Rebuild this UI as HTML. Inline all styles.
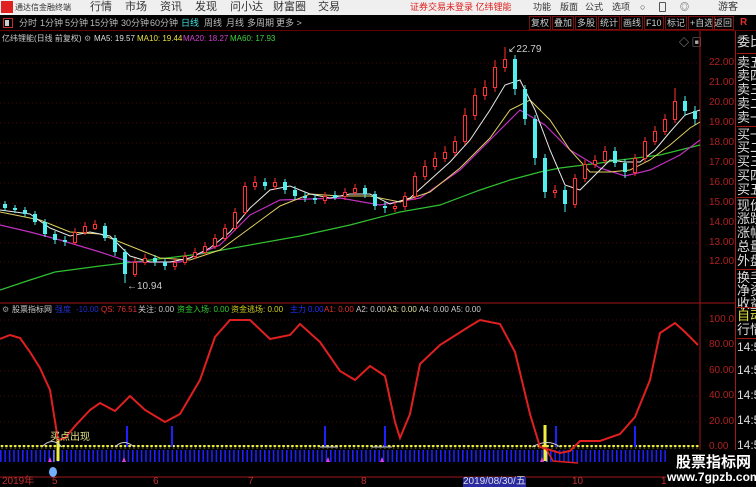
<!DOCTYPE html>
<html><head><meta charset="utf-8"><style>
*{margin:0;padding:0;box-sizing:border-box}
body{width:756px;height:487px;background:#000;overflow:hidden;position:relative;font-family:"Liberation Sans","Noto Sans CJK SC",sans-serif}
.a{position:absolute;white-space:nowrap}
#top{position:absolute;left:0;top:0;width:756px;height:15px;background:#efefef;font-size:11px;color:#333}
#top .a{line-height:15px}
#r2{position:absolute;left:0;top:15px;width:756px;height:16px;background:#000;border-bottom:1px solid #600;font-size:9px;color:#bbb}
#r2 .a{line-height:16px}
.b{position:absolute;top:1px;height:14px;border:1px solid #7a1010;font-size:9px;color:#ccc;line-height:12px;padding:0 1px}
#rc{position:absolute;left:735px;top:31px;width:21px;height:456px;border-left:1px solid #a01818;overflow:hidden;font-size:13px;color:#ddd}
#rc div{position:absolute;left:1px;white-space:nowrap;line-height:14px}
.ax{position:absolute;left:709px;font-size:10px;color:#b02020}
.h{position:absolute;top:304px;font-size:8px;line-height:12px;white-space:nowrap;color:#ccc}
.m{position:absolute;top:33px;font-size:8px;line-height:11px;white-space:nowrap}
.t{position:absolute;top:477px;font-size:10px;color:#c03030;line-height:10px}
</style></head><body>
<div id="top">
<div class="a" style="left:1px;top:1px;width:12px;height:12px;background:#e02020;line-height:12px"></div>
<div class="a" style="left:15px;font-size:8px">通达信金融终端</div>
<div class="a" style="left:90px">行情</div>
<div class="a" style="left:125px">市场</div>
<div class="a" style="left:160px">资讯</div>
<div class="a" style="left:195px">发现</div>
<div class="a" style="left:230px">问小达</div>
<div class="a" style="left:273px">财富圈</div>
<div class="a" style="left:318px">交易</div>
<div class="a" style="left:410px;color:#e02020;font-size:9px">证券交易未登录 亿纬锂能</div>
<div class="a" style="left:533px;font-size:9px">功能</div>
<div class="a" style="left:560px;font-size:9px">版面</div>
<div class="a" style="left:585px;font-size:9px">公式</div>
<div class="a" style="left:612px;font-size:9px">选项</div>
<div class="a" style="left:640px;font-size:9px">○</div>
<div class="a" style="left:659px;top:2px;width:7px;height:10px;border:1px solid #555;border-radius:1px"></div>
<div class="a" style="left:680px;font-size:9px">◎</div>
<div class="a" style="left:718px;font-size:10px">游客</div>
</div>
<div id="r2">
<div class="a" style="left:3px;top:3px;width:10px;height:10px;border:1px solid #c03030;line-height:8px"></div>
<div class="a" style="left:5px;top:5px;width:4px;height:6px;background:#ccc;line-height:6px"></div>
<div class="a" style="left:19px">分时</div>
<div class="a" style="left:40px">1分钟</div>
<div class="a" style="left:65px">5分钟</div>
<div class="a" style="left:90px">15分钟</div>
<div class="a" style="left:121px">30分钟</div>
<div class="a" style="left:150px">60分钟</div>
<div class="a" style="left:181px;color:#40e0e0">日线</div>
<div class="a" style="left:204px">周线</div>
<div class="a" style="left:226px">月线</div>
<div class="a" style="left:247px">多周期</div>
<div class="a" style="left:276px">更多 &gt;</div>
<div class="b" style="left:529px">复权</div><div class="b" style="left:552px">叠加</div><div class="b" style="left:575px">多股</div><div class="b" style="left:598px">统计</div><div class="b" style="left:621px">画线</div><div class="b" style="left:644px">F10</div><div class="b" style="left:665px">标记</div><div class="b" style="left:688px">+自选</div><div class="b" style="left:712px">返回</div>
<div class="a" style="left:740px;top:0;color:#e03030;font-size:10px;font-weight:bold">R</div>
</div>
<div class="m" style="left:2px;color:#ccc">亿纬锂能(日线 前复权)</div>
<div class="m" style="left:84px;color:#999">⚙</div>
<div class="m" style="left:94px;color:#ddd">MA5: 19.57</div>
<div class="m" style="left:137px;color:#e8e040">MA10: 19.44</div>
<div class="m" style="left:183px;color:#d040d0">MA20: 18.27</div>
<div class="m" style="left:230px;color:#40d040">MA60: 17.93</div>
<div class="a" style="left:679px;top:34px;font-size:10px;color:#aaa">◇ ▣</div>

<svg class="a" style="left:0;top:0" width="735" height="487">
<defs>
<pattern id="bl" width="4.4" height="12" patternUnits="userSpaceOnUse"><rect x="0" y="0" width="1.6" height="12" fill="#1d20ff"/></pattern>
<pattern id="yd" width="4.4" height="4" patternUnits="userSpaceOnUse"><circle cx="2" cy="2" r="1.4" fill="#f0f040"/></pattern>
</defs>
<g stroke="#4a0808" stroke-dasharray="1 3" stroke-width="1">
<path d="M0 63H700M0 83H700M0 103H700M0 123H700M0 143H700M0 163H700M0 183H700M0 203H700M0 223H700M0 243H700M0 262H700"/>
<path d="M0 320H700M0 345H700M0 371H700M0 396H700M0 422H700"/>
</g>
<path d="M700 31V477M0 303H735M0 477H735" stroke="#a01818" fill="none"/>
<polyline fill="none" stroke="#30c030" stroke-width="1.2" points="0,290 30,280 55,272 100,266 150,260 200,254 250,245 300,236 350,225 400,212 440,205 480,190 510,180 540,172 560,168 600,163 620,160 660,155 700,145"/>
<polyline fill="none" stroke="#c030c0" stroke-width="1.2" points="0,225 30,232 60,240 100,252 130,262 180,262 220,245 250,215 280,200 340,198 380,205 420,198 460,170 500,130 520,110 545,125 570,150 600,168 625,176 650,170 680,155 700,140"/>
<polyline fill="none" stroke="#e0d060" stroke-width="1" points="0,212 40,220 70,232 100,234 130,246 160,258 190,260 220,250 250,228 280,206 310,194 340,196 370,196 400,202 430,192 460,168 490,138 510,110 530,100 550,120 570,150 590,172 610,172 630,170 650,160 670,145 690,128 700,122"/>
<polyline fill="none" stroke="#e8e8e8" stroke-width="1" points="0,210 30,214 50,228 70,236 90,232 110,236 130,256 150,262 170,262 190,258 210,248 230,232 250,208 270,190 290,186 310,194 330,198 350,194 370,194 390,204 410,198 430,180 450,162 470,140 490,110 505,85 520,80 535,110 550,150 565,185 580,190 595,175 610,160 625,162 640,162 655,150 670,132 685,115 700,110"/>
<path stroke="#50f0f0" stroke-width="1" d="M5 201V211M15 205V213M25 207V217M35 211V225M45 219V237M55 231V244M65 236V246M105 223V241M115 235V256M125 249V283M155 255V266M165 259V270M265 178V190M285 179V194M295 186V200M305 192V202M315 194V204M335 191V200M365 185V198M375 191V210M385 202V213M515 55V95M525 85V125M535 115V165M545 154V198M565 186V212M615 147V167M625 159V178M685 96V116M695 106V125"/>
<path stroke="#ff3030" stroke-width="1" d="M75 228V245M85 222V235M95 220V230M135 258V277M145 254V265M175 258V270M185 252V265M195 248V259M205 242V255M215 234V249M225 224V241M235 208V231M245 182V215M255 176V190M275 178V190M325 192V204M345 188V200M355 184V196M395 202V212M405 192V210M415 172V200M425 160V180M435 152V170M445 146V162M455 136V156M465 108V145M475 88V120M485 80V100M495 60V92M505 47V72M555 185V198M575 174V208M585 160V182M595 155V168M605 146V164M635 154V176M645 137V162M655 126V145M665 114V135M675 88V123"/>
<g fill="#50f0f0">
<rect x="3" y="204" width="4" height="4"/><rect x="13" y="208" width="4" height="2"/><rect x="23" y="210" width="4" height="4"/><rect x="33" y="214" width="4" height="8"/><rect x="43" y="222" width="4" height="12"/><rect x="53" y="234" width="4" height="6"/><rect x="63" y="240" width="4" height="2"/><rect x="103" y="226" width="4" height="12"/><rect x="113" y="238" width="4" height="14"/><rect x="123" y="252" width="4" height="22"/><rect x="153" y="258" width="4" height="4"/><rect x="163" y="262" width="4" height="4"/><rect x="263" y="182" width="4" height="4"/><rect x="283" y="182" width="4" height="8"/><rect x="293" y="190" width="4" height="6"/><rect x="303" y="196" width="4" height="2"/><rect x="313" y="198" width="4" height="2"/><rect x="333" y="195" width="4" height="3"/><rect x="363" y="188" width="4" height="6"/><rect x="373" y="194" width="4" height="12"/><rect x="383" y="206" width="4" height="2"/><rect x="513" y="59" width="4" height="30"/><rect x="523" y="89" width="4" height="30"/><rect x="533" y="119" width="4" height="39"/><rect x="543" y="158" width="4" height="34"/><rect x="563" y="190" width="4" height="14"/><rect x="613" y="151" width="4" height="12"/><rect x="623" y="163" width="4" height="9"/><rect x="683" y="101" width="4" height="10"/><rect x="693" y="111" width="4" height="8"/>
</g>
<g fill="#000" stroke="#ff3030" stroke-width="1">
<rect x="73.5" y="232.5" width="3" height="10"/><rect x="83.5" y="226.5" width="3" height="6"/><rect x="93.5" y="224.5" width="3" height="4"/><rect x="133.5" y="262.5" width="3" height="12"/><rect x="143.5" y="258.5" width="3" height="4"/><rect x="173.5" y="262.5" width="3" height="4"/><rect x="183.5" y="256.5" width="3" height="6"/><rect x="193.5" y="252.5" width="3" height="4"/><rect x="203.5" y="246.5" width="3" height="6"/><rect x="213.5" y="238.5" width="3" height="8"/><rect x="223.5" y="228.5" width="3" height="10"/><rect x="233.5" y="212.5" width="3" height="16"/><rect x="243.5" y="186.5" width="3" height="26"/><rect x="253.5" y="182.5" width="3" height="4"/><rect x="273.5" y="182.5" width="3" height="4"/><rect x="323.5" y="196.5" width="3" height="4"/><rect x="343.5" y="192.5" width="3" height="4"/><rect x="353.5" y="188.5" width="3" height="4"/><rect x="393.5" y="206.5" width="3" height="2"/><rect x="403.5" y="196.5" width="3" height="10"/><rect x="413.5" y="176.5" width="3" height="20"/><rect x="423.5" y="166.5" width="3" height="10"/><rect x="433.5" y="158.5" width="3" height="8"/><rect x="443.5" y="152.5" width="3" height="6"/><rect x="453.5" y="141.5" width="3" height="11"/><rect x="463.5" y="115.5" width="3" height="26"/><rect x="473.5" y="95.5" width="3" height="20"/><rect x="483.5" y="87.5" width="3" height="8"/><rect x="493.5" y="67.5" width="3" height="20"/><rect x="503.5" y="59.5" width="3" height="8"/><rect x="553.5" y="190.5" width="3" height="2"/><rect x="573.5" y="178.5" width="3" height="26"/><rect x="583.5" y="164.5" width="3" height="14"/><rect x="593.5" y="160.5" width="3" height="4"/><rect x="603.5" y="151.5" width="3" height="9"/><rect x="633.5" y="158.5" width="3" height="14"/><rect x="643.5" y="141.5" width="3" height="17"/><rect x="653.5" y="131.5" width="3" height="10"/><rect x="663.5" y="119.5" width="3" height="12"/><rect x="673.5" y="101.5" width="3" height="18"/>
</g>
<text x="127" y="289" font-size="10" fill="#ccc" font-family="Liberation Sans">←10.94</text>
<text x="508" y="52" font-size="10" fill="#ccc" font-family="Liberation Sans">↙22.79</text>
<rect x="0" y="450" width="700" height="12" fill="url(#bl)"/>
<rect x="0" y="445" width="700" height="4" fill="url(#yd)"/>
<path stroke="#2020ff" stroke-width="2" d="M127 426V447M172 426V447M325 426V447M385 426V447M556 426V447M635 426V447"/>
<path stroke="#f0f040" stroke-width="3" d="M58 440V461M545 425V461"/>
<path stroke="#fff" stroke-width="1" d="M54 450V462M547 450V462" opacity=".7"/>
<path fill="none" stroke="#ccc" stroke-width="1" d="M42 447Q52 436 62 447M115 447Q124 438 134 447M320 447H338M372 447H392M532 447Q548 438 560 447"/>
<g fill="#e040e0"><path d="M48 462l2-5 2 5z"/><path d="M122 462l2-5 2 5z"/><path d="M326 462l2-5 2 5z"/><path d="M380 462l2-5 2 5z"/><path d="M540 462l2-5 2 5z"/></g>
<polyline fill="none" stroke="#e02020" stroke-width="2" points="0,339 10,335 20,338 30,352 40,368 50,390 58,440 65,438 75,426 90,410 100,403 115,411 130,396 145,410 165,422 180,414 200,380 215,337 230,320 250,320 270,339 290,335 300,324 320,342 340,371 355,380 370,366 385,376 395,422 400,438 410,414 420,364 440,345 470,326 480,320 500,324 515,352 530,414 540,447 560,453 570,451 580,441 600,441 620,434 635,417 650,380 660,333 675,323 685,332 698,345"/>
<path d="M545 447l8 14 25 2" stroke="#e02020" stroke-width="1.5" fill="none"/>
<text x="50" y="440" font-size="10" fill="#e0e080" font-family="Liberation Sans,Noto Sans CJK SC">买点出现</text>
<ellipse cx="53" cy="472" rx="4" ry="5" fill="#70b0ff"/>
</svg>

<div class="h" style="left:2px;color:#999">⚙</div>
<div class="h" style="left:12px">股票指标网</div>
<div class="h" style="left:55px;color:#2030d0">强度</div>
<div class="h" style="left:76px;color:#2030d0">-10.00</div>
<div class="h" style="left:101px;color:#e03030">QS: 76.51</div>
<div class="h" style="left:138px">关注: 0.00</div>
<div class="h" style="left:177px;color:#30d030">资金入场: 0.00</div>
<div class="h" style="left:231px;color:#d0d020">资金逃场: 0.00</div>
<div class="h" style="left:290px;color:#2030ff">主力</div>
<div class="h" style="left:308px;color:#2030ff">0.00</div>
<div class="h" style="left:324px;color:#e03030">A1: 0.00</div>
<div class="h" style="left:356px">A2: 0.00</div>
<div class="h" style="left:387px;color:#e0e0a0">A3: 0.00</div>
<div class="h" style="left:419px">A4: 0.00</div>
<div class="h" style="left:451px">A5: 0.00</div>

<div class="ax" style="top:57px">22.00</div><div class="ax" style="top:77px">21.00</div><div class="ax" style="top:97px">20.00</div><div class="ax" style="top:117px">19.00</div><div class="ax" style="top:137px">18.00</div><div class="ax" style="top:157px">17.00</div><div class="ax" style="top:177px">16.00</div><div class="ax" style="top:197px">15.00</div><div class="ax" style="top:217px">14.00</div><div class="ax" style="top:237px">13.00</div><div class="ax" style="top:256px">12.00</div>
<div class="ax" style="top:314px">100.0</div><div class="ax" style="top:339px">80.00</div><div class="ax" style="top:365px">60.00</div><div class="ax" style="top:390px">40.00</div><div class="ax" style="top:416px">20.00</div><div class="ax" style="top:441px">0.00</div>

<div id="rc">
<div style="top:4px">委比</div>
<div style="top:22px;width:30px;border-top:1px solid #a01818;padding-top:2px">卖五</div><div style="top:38px">卖四</div><div style="top:52px">卖三</div><div style="top:66px">卖二</div><div style="top:80px">卖一</div>
<div style="top:95px;width:30px;border-top:1px solid #a01818;padding-top:1px">买一</div><div style="top:110px">买二</div><div style="top:124px">买三</div><div style="top:138px">买四</div><div style="top:152px">买五</div>
<div style="top:166px;width:30px;border-top:1px solid #a01818;padding-top:1px">现价</div><div style="top:181px">涨跌</div><div style="top:195px">涨幅</div><div style="top:209px">总量</div><div style="top:223px">外盘</div>
<div style="top:238px;width:30px;border-top:1px solid #a01818;padding-top:1px">换手</div><div style="top:253px">净资</div><div style="top:266px">收益</div>
<div style="top:276px;width:30px;border-top:1px solid #a01818;padding-top:1px;color:#e0e040">自动</div><div style="top:292px">行情</div>
<div style="top:307px;width:30px;border-top:1px solid #a01818;padding-top:1px;font-size:12px">14:50</div><div style="top:332px;font-size:12px">14:50</div><div style="top:357px;font-size:12px">14:50</div><div style="top:382px;font-size:12px">14:50</div><div style="top:407px;font-size:12px">14:50</div>
</div>

<div class="t" style="left:2px">2019年</div>
<div class="t" style="left:52px">5</div>
<div class="t" style="left:153px">6</div>
<div class="t" style="left:248px">7</div>
<div class="t" style="left:361px">8</div>
<div class="t" style="left:463px;color:#ddd;background:#2a2aa0">2019/08/30/五</div>
<div class="t" style="left:572px">10</div>
<div class="t" style="left:661px">1</div>
<div class="a" style="left:666px;top:450px;width:90px;height:37px;background:#000"></div>
<div class="a" style="left:676px;top:451px;font-size:15px;font-weight:bold;color:#fff">股票指标网</div>
<div class="a" style="left:667px;top:470px;font-size:12px;font-weight:bold;color:#fff">www.7gpzb.com</div>
</body></html>
